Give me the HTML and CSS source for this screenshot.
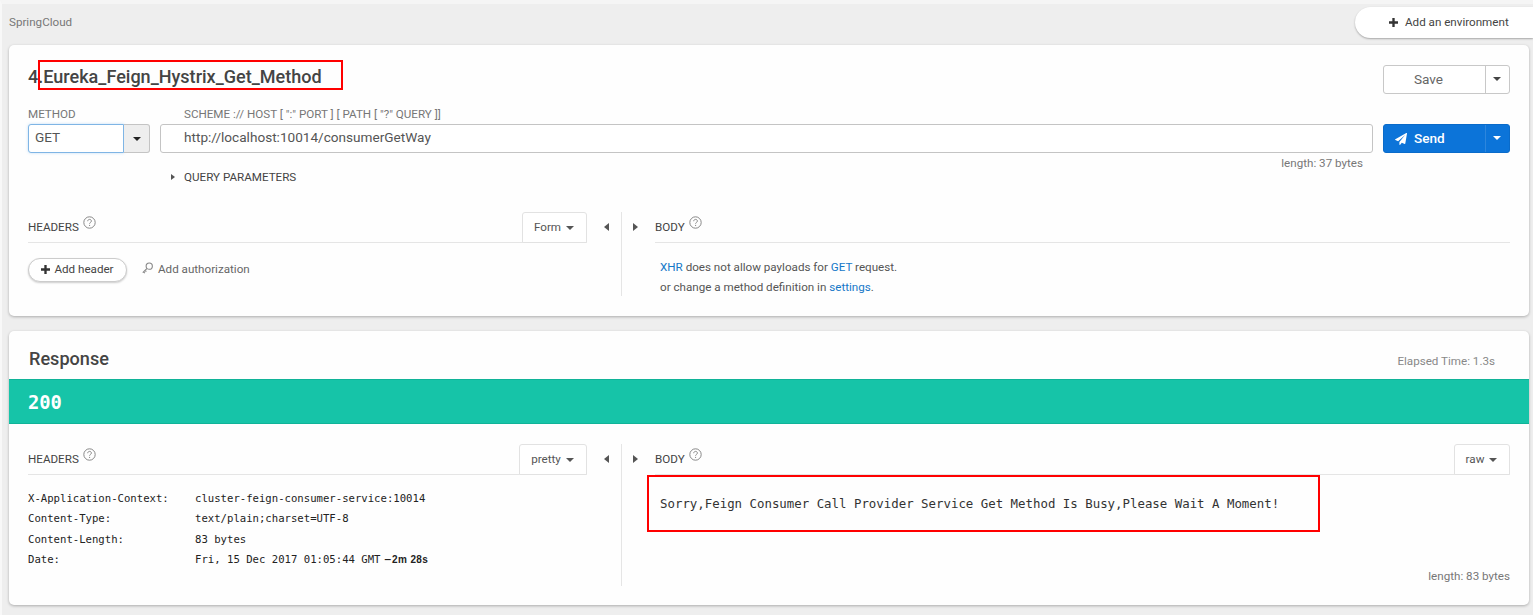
FILE: index.html
```html
<!DOCTYPE html>
<html lang="en">
<head>
<meta charset="utf-8">
<title>SpringCloud</title>
<link rel="stylesheet" href="styles.css">
</head>
<body>
<div class="page">
  <header class="topbar">
    <span class="project">SpringCloud</span>
    <button class="environment">
      <svg class="plus" viewBox="0 0 10 10"><path d="M3.7 0h2.6v3.7H10v2.6H6.3V10H3.7V6.3H0V3.7h3.7z"/></svg>
      <span>Add an environment</span>
    </button>
  </header>

  <section class="card request">
    <div class="title-row">
      <h1 class="title">4.Eureka_Feign_Hystrix_Get_Method<span class="mark mark-title"></span></h1>
      <div class="split save">
        <button class="split-main">Save</button>
        <button class="split-toggle"><i class="caret"></i></button>
      </div>
    </div>

    <div class="labels"><span class="label-method">METHOD</span><span class="label-scheme">SCHEME :// HOST [ ":" PORT ] [ PATH [ "?" QUERY ]]</span></div>
    <div class="request-row">
      <div class="method">
        <span class="method-value">GET</span>
        <span class="method-toggle"><i class="caret"></i></span>
      </div>
      <div class="url"><span>http://localhost:10014/consumerGetWay</span></div>
      <div class="split send">
        <button class="split-main">
          <svg class="plane" viewBox="0 0 12 12"><path fill-rule="evenodd" d="M11.8.1a.4.4 0 0 1 .2.5l-1.7 10a.5.5 0 0 1-.6.3L6.8 9.7l-1.6 2c-.3.4-.8.2-.8-.3V9.1l5.700-7-7 6.100L.4 7.100C0 6.900 0 6.500.300 6.300L11.300.1a.5.5 0 0 1 .5 0z"/></svg>
          <span>Send</span>
        </button>
        <button class="split-toggle"><i class="caret"></i></button>
      </div>
    </div>
    <div class="url-length">length: 37 bytes</div>
    <div class="query"><i class="arrow-right"></i><span>QUERY PARAMETERS</span></div>

    <div class="columns request-columns">
      <div class="column-left">
        <div class="column-head">
          <span class="column-title">HEADERS</span>
          <svg class="help" viewBox="0 0 13 13"><circle cx="6.500" cy="6.500" r="5.700"/><path d="M4.700 5.200c0-2.400 3.700-2.400 3.700-.1 0 1.300-1.800 1.300-1.800 2.600M6.600 8.900v1.100"/></svg>
          <button class="tab tab-form">Form<i class="caret"></i></button>
        </div>
        <div class="header-actions">
          <button class="add-header"><svg class="plus" viewBox="0 0 10 10"><path d="M3.700 0h2.600v3.700H10v2.600H6.300V10H3.700V6.300H0V3.700h3.700z"/></svg><span>Add header</span></button>
          <button class="add-auth"><svg class="key" viewBox="0 0 12 12"><circle cx="7.900" cy="4" r="3.400"/><path d="M5.500 6.400L.8 11.100M1.700 10.200l1.500 1.300M3.400 8.500l1.400 1.300"/></svg><span>Add authorization</span></button>
        </div>
      </div>
      <div class="splitter"><i class="arrow-left"></i><i class="rule"></i><i class="arrow-right"></i></div>
      <div class="column-right">
        <div class="column-head">
          <span class="column-title">BODY</span>
          <svg class="help" viewBox="0 0 13 13"><circle cx="6.500" cy="6.500" r="5.700"/><path d="M4.700 5.200c0-2.400 3.700-2.400 3.700-.1 0 1.300-1.800 1.300-1.800 2.600M6.600 8.900v1.100"/></svg>
        </div>
        <p class="notice"><a>XHR</a> does not allow payloads for <a>GET</a> request.<br>or change a method definition in <a>settings</a>.</p>
      </div>
    </div>
  </section>

  <section class="card response">
    <div class="response-head">
      <h2 class="response-title">Response</h2>
      <span class="elapsed">Elapsed Time: 1.3s</span>
    </div>
    <div class="status">200</div>
    <div class="columns response-columns">
      <div class="column-left">
        <div class="column-head">
          <span class="column-title">HEADERS</span>
          <svg class="help" viewBox="0 0 13 13"><circle cx="6.500" cy="6.500" r="5.700"/><path d="M4.700 5.200c0-2.400 3.700-2.400 3.700-.1 0 1.300-1.800 1.300-1.800 2.600M6.600 8.900v1.100"/></svg>
          <button class="tab tab-pretty">pretty<i class="caret"></i></button>
        </div>
        <dl class="header-list">
          <dt>X-Application-Context:</dt><dd>cluster-feign-consumer-service:10014</dd>
          <dt>Content-Type:</dt><dd>text/plain;charset=UTF-8</dd>
          <dt>Content-Length:</dt><dd>83 bytes</dd>
          <dt>Date:</dt><dd>Fri, 15 Dec 2017 01:05:44 GMT <b class="skew"><span class="minus">−</span>2m 28s</b></dd>
        </dl>
      </div>
      <div class="splitter"><i class="arrow-left"></i><i class="rule"></i><i class="arrow-right"></i></div>
      <div class="column-right">
        <div class="column-head">
          <span class="column-title">BODY</span>
          <svg class="help" viewBox="0 0 13 13"><circle cx="6.500" cy="6.500" r="5.700"/><path d="M4.700 5.200c0-2.400 3.700-2.400 3.700-.1 0 1.300-1.800 1.300-1.800 2.600M6.600 8.900v1.100"/></svg>
          <button class="tab tab-raw">raw<i class="caret"></i></button>
        </div>
        <div class="payload">Sorry,Feign Consumer Call Provider Service Get Method Is Busy,Please Wait A Moment!<span class="mark mark-body"></span></div>
        <div class="body-length">length: 83 bytes</div>
      </div>
    </div>
  </section>
</div>
</body>
</html>
```
FILE: styles.css
```css
* { box-sizing: border-box; }
body { margin: 0; font: 11.640px/16px Roboto, sans-serif; color: #444; background: #eee; }
button { margin: 0; padding: 0; border: 0; background: none; color: inherit; font: inherit; display: flex; align-items: center; }
h1, h2, p, dl, dd { margin: 0; }
svg { display: block; flex: none; }
.page { height: 615px; overflow: hidden; border-top: 4px solid #f5f5f5; border-left: 2px solid #f8f8f8; padding: 0 0 0 7px; }

.topbar { height: 41px; display: flex; justify-content: space-between; align-items: flex-start; }
.project { color: #777; padding-top: 10px; }
.environment { width: 178px; height: 31px; margin-top: 3px; padding: 0 0 1px 34px; gap: 7px; background: #fff; border-radius: 16px 0 0 16px; box-shadow: 0 1px 2px rgba(0,0,0,.3); color: #444; }
.plus { width: 9px; height: 9px; fill: #333; }

.card { width: 1520px; background: #fefefe; border-radius: 5px; box-shadow: 0 1px 3px rgba(0,0,0,.28); }
.request { height: 271px; padding: 0 19px; }
.response { height: 274px; margin-top: 15px; }

.title-row { height: 60px; display: flex; justify-content: space-between; }
.title { position: relative; font-size: 18.050px; font-weight: 500; line-height: 24px; margin-top: 20px; height: 24px; }
.mark { position: absolute; border: 2px solid #f00; }
.mark-title { left: 10px; top: -5px; width: 305px; height: 30px; }

.split { width: 127px; height: 29px; display: flex; border-radius: 3px; font-size: 13.600px; }
.split-main { flex: 1; padding-bottom: 1px; }
.split-toggle { width: 24px; justify-content: center; }
.save { margin-top: 20px; border: 1px solid #c8c8c8; background: #fff; color: #666; }
.save .split-main { padding-left: 30px; }
.save .split-toggle { border-left: 1px solid #c8c8c8; color: #444; }
.save .caret, .send .caret { margin: 0 1px 1px 0; }
.send { background: #0c74d9; border: 1px solid #0a6bca; color: #fff; font-weight: 500; }
.send .split-main { padding: 0 0 2px 11px; gap: 7px; }
.send .split-toggle { border-left: 1px solid #2d86dd; }
.plane { width: 12px; height: 12px; fill: #fff; margin-top: 2px; }
.caret { display: block; border: 4px solid transparent; border-top-color: currentColor; border-bottom: 0; }
.arrow-right { display: block; border: 4px solid transparent; border-left: 5px solid #555; border-right: 0; }
.arrow-left { display: block; border: 4px solid transparent; border-right: 5px solid #555; border-left: 0; }

.labels { display: flex; height: 19px; color: #777; line-height: 19px; }
.label-method { width: 156px; }
.request-row { display: flex; gap: 10px; height: 29px; font-size: 13.600px; color: #555; }
.method { display: flex; width: 122px; }
.method-value { width: 96px; border: 1px solid #7fb5e5; border-radius: 3px 0 0 3px; padding-left: 6px; line-height: 25px; box-shadow: 0 0 3px rgba(80,160,230,.35); background: #fff; }
.method-toggle { width: 26px; display: flex; align-items: center; justify-content: center; border: 1px solid #c4c4c4; border-left: 0; border-radius: 0 3px 3px 0; background: #eee; color: #222; }
.url { flex: 1; border: 1px solid #c4c4c4; border-radius: 3px; background: #fff; padding-left: 23px; line-height: 25px; }
.url-length { height: 16px; margin-top: 2px; text-align: right; padding-right: 147px; color: #777; }
.query { display: flex; align-items: center; height: 12px; padding-left: 143px; gap: 8px; }
.query .arrow-right { border-width: 3.500px 0 3.500px 4px; margin-right: 1px; }

.columns { display: flex; }
.request-columns { height: 84px; margin-top: 29px; }
.column-left { width: 559px; }
.column-right { width: 855px; }
.column-head { display: flex; height: 31px; border-bottom: 1px solid #e5e5e5; }
.column-title { line-height: 31px; }
.help { width: 13px; height: 13px; margin: 4px 0 0 4px; fill: none; stroke: #888; stroke-width: 1; }
.tab { margin-left: auto; height: 31px; border: 1px solid #e2e2e2; border-radius: 3px 3px 0 0; justify-content: center; gap: 5px; color: #555; background: #fff; padding: 0 1px 1px 0; }
.tab .caret { margin-top: 2px; }
.tab-form { width: 65px; }
.tab-pretty { width: 68px; }
.tab-raw { width: 56px; }
.splitter { width: 68px; display: flex; padding-left: 17px; }
.splitter .arrow-left { margin-top: 11px; height: 8px; }
.splitter .arrow-right { margin-top: 11px; height: 8px; margin-left: 11px; }
.rule { width: 1px; margin-left: 12px; background: #e5e5e5; }

.header-actions { display: flex; padding-top: 15px; gap: 15px; }
.add-header { width: 99px; height: 24px; border: 1px solid #ccc; border-radius: 12px; justify-content: center; gap: 4px; background: #fff; box-shadow: 0 1px 2px rgba(0,0,0,.2); padding-bottom: 2px; }
.add-auth { gap: 5px; color: #666; height: 22px; }
.key { width: 11px; height: 12px; margin-top: -2px; fill: none; stroke: #888; stroke-width: 1.200; }
.notice { padding: 14px 0 0 5px; line-height: 20px; color: #555; }
.notice a { color: #1578c8; }

.response-head { display: flex; justify-content: space-between; height: 48px; padding: 0 34px 0 20px; }
.response-title { font-size: 18.100px; font-weight: 500; line-height: 24px; padding-top: 16px; }
.elapsed { color: #888; padding-top: 22px; }
.status { height: 45px; padding-left: 19px; background: #16c4a8; border: solid #10b398; border-width: 1px 0; color: #fff; font: bold 18.800px/46px "DejaVu Sans Mono", monospace; }
.response-columns { height: 142px; margin: 20px 19px 0; }
.header-list { display: grid; grid-template-columns: 167px 1fr; grid-auto-rows: 20.300px; padding-top: 13px; font: 10.630px/21px "DejaVu Sans Mono", monospace; color: #222; }
.skew { font: bold 10px "Liberation Sans", sans-serif; letter-spacing: .35px; margin-left: -2px; }
.minus { display: inline-block; transform: scaleX(1.200); margin-right: 1px; }
.payload { position: relative; padding-left: 5px; height: 93px; padding-top: 18px; font: 12.400px/22px "DejaVu Sans Mono", monospace; color: #333; white-space: nowrap; }
.mark-body { left: -8px; top: 0; width: 673px; height: 57px; }
.body-length { text-align: right; color: #777; }
```
